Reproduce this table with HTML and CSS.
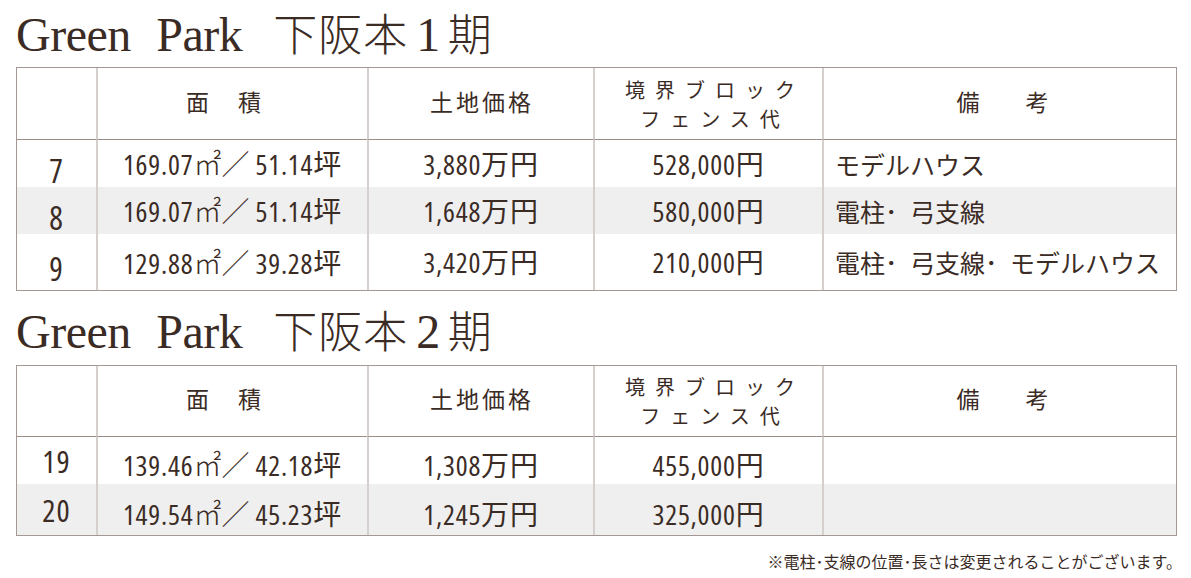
FILE: index.html
```html
<!DOCTYPE html>
<html lang="ja">
<head>
<meta charset="utf-8">
<title>Green Park 下阪本</title>
<link rel="stylesheet" href="styles.css">
</head>
<body>
<div class="page">
  <h1 class="title title--first"><span class="title-lat">Green Park</span><span class="title-cjk title-cjk--lead">下阪本</span><span class="title-lat title-num">1</span><span class="title-cjk">期</span></h1>
  <table class="lots lots--first">
    <colgroup><col class="c-no"><col class="c-area"><col class="c-price"><col class="c-fence"><col class="c-note"></colgroup>
    <thead>
      <tr class="head-row"><th></th><th class="h-area">面　積</th><th class="h-price">土地価格</th><th class="h-fence">境界ブロック<br>フェンス代</th><th class="h-note">備　　考</th></tr>
    </thead>
    <tbody>
      <tr class="row row--a"><td class="no">7</td><td class="num">169.07<span class="unit">㎡／</span> 51.14坪</td><td class="num">3,880万円</td><td class="num">528,000円</td><td class="note">モデルハウス</td></tr>
      <tr class="row row--b row--shade"><td class="no">8</td><td class="num">169.07<span class="unit">㎡／</span> 51.14坪</td><td class="num">1,648万円</td><td class="num">580,000円</td><td class="note">電柱･&ensp;弓支線</td></tr>
      <tr class="row row--c"><td class="no">9</td><td class="num">129.88<span class="unit">㎡／</span> 39.28坪</td><td class="num">3,420万円</td><td class="num">210,000円</td><td class="note">電柱･&ensp;弓支線･&ensp;モデルハウス</td></tr>
    </tbody>
  </table>

  <h1 class="title title--second"><span class="title-lat">Green Park</span><span class="title-cjk title-cjk--lead">下阪本</span><span class="title-lat title-num">2</span><span class="title-cjk">期</span></h1>
  <table class="lots lots--second">
    <colgroup><col class="c-no"><col class="c-area"><col class="c-price"><col class="c-fence"><col class="c-note"></colgroup>
    <thead>
      <tr class="head-row"><th></th><th class="h-area">面　積</th><th class="h-price">土地価格</th><th class="h-fence">境界ブロック<br>フェンス代</th><th class="h-note">備　　考</th></tr>
    </thead>
    <tbody>
      <tr class="row row--d"><td class="no">19</td><td class="num">139.46<span class="unit">㎡／</span> 42.18坪</td><td class="num">1,308万円</td><td class="num">455,000円</td><td class="note"></td></tr>
      <tr class="row row--e row--shade"><td class="no">20</td><td class="num">149.54<span class="unit">㎡／</span> 45.23坪</td><td class="num">1,245万円</td><td class="num">325,000円</td><td class="note"></td></tr>
    </tbody>
  </table>

  <p class="footnote">※電柱･支線の位置･長さは変更されることがございます。</p>
</div>
</body>
</html>
```

FILE: styles.css
```css
* { box-sizing: border-box; }

body {
  margin: 0;
  background: #ffffff;
  color: #3b2b25;
  font-family: "Noto Sans CJK JP", sans-serif;
}

.page {
  width: 1191px;
  padding-left: 16px;
}

.title {
  margin: 0;
  height: 67px;
  line-height: 67px;
  font-family: "Liberation Serif", serif;
  font-weight: 400;
  font-size: 48px;
  letter-spacing: -0.5px;
  word-spacing: 14px;
  white-space: nowrap;
  color: #3b2b25;
}

.title--first {
  padding-top: 3px;
  line-height: 64px;
}

.title--second {
  height: 74px;
  padding-top: 7px;
}

.title-cjk {
  font-family: "Noto Sans CJK JP", sans-serif;
  font-size: 44px;
  font-weight: 300;
  letter-spacing: 0;
  line-height: 1;
}

.title-cjk--lead { margin-left: 31px; letter-spacing: 1px; }
.title-num { margin: 0 8px 0 8px; }

.lots {
  width: 1161px;
  table-layout: fixed;
  border-collapse: separate;
  border-spacing: 0;
  border: 1px solid #a39893;
}

.c-no { width: 79px; }
.c-area { width: 271px; }
.c-price { width: 226px; }
.c-fence { width: 229px; }
.c-note { width: 354px; }

.lots th,
.lots td {
  padding: 0;
  vertical-align: middle;
  text-align: center;
  font-weight: 400;
  white-space: nowrap;
}

.lots th + th,
.lots td + td {
  border-left: 2px solid #d5d0ce;
}

.lots th {
  border-bottom: 1px solid #9b8d88;
  font-family: "Noto Sans CJK JP", sans-serif;
  font-size: 23px;
  line-height: 34px;
  letter-spacing: 3px;
  padding-bottom: 6px;
}

.lots .h-area { padding-right: 15px; }
.lots .h-price { padding-left: 2px; }
.lots .h-fence {
  font-size: 20px;
  line-height: 29px;
  letter-spacing: 10px;
  padding: 0 0 0 13px;
}
.lots .h-note { letter-spacing: 0; padding-left: 5px; }

.lots--first .head-row { height: 72px; }
.lots--second .head-row { height: 71px; }

.row--a { height: 47px; }
.row--b { height: 47px; }
.row--c { height: 56px; }
.row--d { height: 47px; }
.row--e { height: 51px; }

.row--shade td { background: #efefef; }

.lots .num {
  font-family: "Open Sans", "Noto Sans CJK JP", sans-serif;
  font-stretch: 75%;
  font-size: 28px;
  line-height: 30px;
  letter-spacing: 0.8px;
}

.unit {
  font-family: "Noto Sans CJK JP", sans-serif;
  font-weight: 300;
  letter-spacing: 0;
}

.lots .no {
  font-family: "Open Sans", "Noto Sans CJK JP", sans-serif;
  font-stretch: 75%;
  font-size: 32px;
  line-height: 30px;
  letter-spacing: 1px;
}

.lots--first .no { padding-top: 14px; }
.lots--second .no { font-size: 31px; }
.lots--second .num { padding-top: 8px; }

.lots .note {
  text-align: left;
  padding-left: 11px;
  font-family: "Noto Sans CJK JP", sans-serif;
  font-size: 25px;
  line-height: 30px;
}

.footnote {
  margin: 15px -5px 0 0;
  width: 1166px;
  text-align: right;
  font-family: "Noto Sans CJK JP", sans-serif;
  font-size: 16px;
  line-height: 20px;
  color: #3b2b25;
}
```
